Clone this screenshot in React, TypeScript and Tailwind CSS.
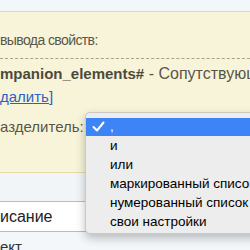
import React from "react";

export default function App() {
  const items = ["и", "или", "маркированный список", "нумерованный список", "свои настройки"];
  return (
    <div className="relative w-[250px] h-[250px] overflow-hidden bg-[#f4f7fa] text-[#5a5647]" style={{ fontFamily: '"Liberation Sans", Arial, sans-serif' }}>
      <div className="h-[11px] bg-[#f4f7fa]" />
      <div className="h-[162px] border-t border-b border-[#e3dba9] bg-[#f8f4d9] flex flex-col">
        <div className="pt-[20px] text-[14px] leading-[16px] tracking-[-0.6px] whitespace-nowrap">вывода свойств:</div>
        <div className="mt-[10px] border-t border-dashed border-[#a8a27e] w-[260px]" />
        <div className="mt-[7px] text-[15px] leading-[16px] whitespace-nowrap">
          <span className="font-bold text-[#4d4a3c]">mpanion_elements#</span>
          <span className="text-[16px]"> - Сопутствующие</span>
        </div>
        <div className="mt-[7px] text-[15px] leading-[16px] whitespace-nowrap text-[#2a62c9] underline">далить]</div>
        <div className="mt-[14px] text-[15px] leading-[16px] whitespace-nowrap">азделитель:</div>
      </div>
      <div className="h-[28px] bg-[#f2f5f8]" />
      <div className="h-[31px] bg-white border-t border-b border-[#b9bcbf] flex items-center text-[16px] text-[#222] whitespace-nowrap">исание</div>
      <div className="pt-[7px] text-[15px] leading-[16px] text-[#333] whitespace-nowrap">ект</div>

      <div className="absolute left-[85px] top-[112px] w-[180px] h-[122px] rounded-[5px] bg-[#ededed] border border-[#c9c9c9] shadow-[0_4px_10px_rgba(0,0,0,0.25)] pt-[5px] text-[13.5px] text-black">
        <div className="h-[18px] bg-[#3d84f6] text-white flex items-center relative">
          <svg className="absolute left-[6px] top-[3px]" width="13" height="11" viewBox="0 0 13 11">
            <path d="M1.5 6 L5 9.5 L11.5 1.5" fill="none" stroke="white" strokeWidth="2" strokeLinecap="round" strokeLinejoin="round" />
          </svg>
          <span className="pl-[24px] leading-[18px]">,</span>
        </div>
        {items.map((t) => (
          <div key={t} className="h-[19px] leading-[19px] pl-[24px] whitespace-nowrap">{t}</div>
        ))}
      </div>
    </div>
  );
}
